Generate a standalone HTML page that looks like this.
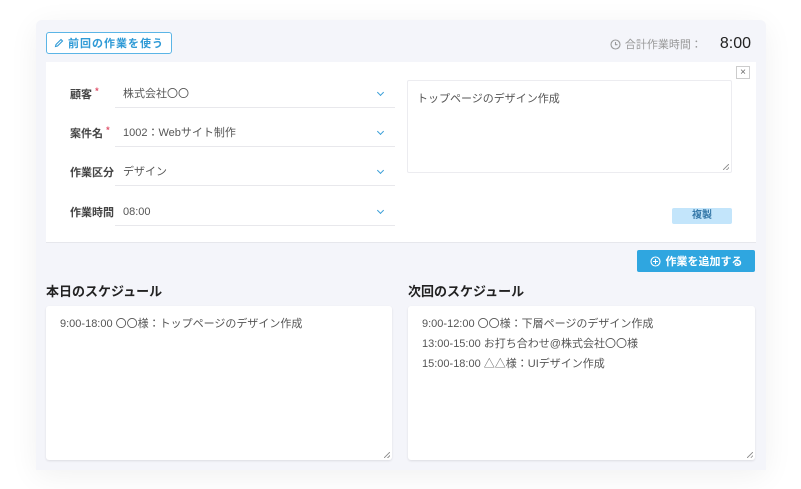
<!DOCTYPE html>
<html><head><meta charset="utf-8"><style>
*{box-sizing:border-box;margin:0;padding:0}
body{width:801px;height:489px;background:#fff;font-family:"Liberation Sans","Noto Sans CJK JP",sans-serif;position:relative;overflow:hidden;color:#555}
.card{position:absolute;left:36px;top:20px;width:730px;height:450px;background:#f4f5fa;border-radius:6px 6px 0 0;box-shadow:0 6px 30px rgba(0,0,0,.06)}
.abs{position:absolute}
.btn1{left:46px;top:32px;width:126px;height:22px;border:1px solid #5bb5e6;border-radius:3px;background:#fff;color:#2f9ad6;font-size:11px;font-weight:bold;display:flex;align-items:center;justify-content:center;gap:4px;letter-spacing:1px}
.total{right:50px;top:35px;font-size:11px;color:#999;display:flex;align-items:center;gap:4px}
.total b{font-weight:normal;color:#222;font-size:16px;margin-left:14px}
.panel{left:46px;top:62px;width:710px;height:181px;background:#fff;border-bottom:1px solid #e6e7ec}
.lbl{left:70px;font-size:11px;font-weight:bold;color:#444}
.lbl i{color:#e0526b;font-style:normal;font-size:9px;vertical-align:top}
.sel{left:115px;width:280px;height:22px;border-bottom:1px solid #e8e8ec;font-size:11px;color:#555;padding-left:8px;line-height:16px}
.sel:after{content:"";position:absolute;right:12px;top:4px;width:4px;height:4px;border-right:1.3px solid #3a9fd8;border-bottom:1.3px solid #3a9fd8;transform:rotate(45deg)}
.ta{left:407px;top:80px;width:325px;height:93px;border:1px solid #ececf0;border-radius:2px;font-size:11px;color:#555;padding:9px 9px}
.grip{position:absolute;right:2px;bottom:2px;width:6px;height:6px;background:linear-gradient(135deg,transparent 45%,#999 45%,#999 55%,transparent 55%,transparent 75%,#999 75%,#999 85%,transparent 85%)}
.x{left:736px;top:66px;width:14px;height:13px;border:1px solid #ccc;font-size:10px;line-height:11px;text-align:center;color:#666}
.dup{left:672px;top:208px;width:60px;height:16px;background:#c3e5fb;color:#3578a8;font-size:10px;font-weight:bold;text-align:center;line-height:16px;border-radius:2px}
.add{left:637px;top:250px;width:118px;height:22px;background:#2fa6e0;color:#fff;font-size:11px;font-weight:bold;display:flex;align-items:center;justify-content:center;gap:5px;border-radius:2px}
.h{top:281px;font-size:13px;font-weight:bold;color:#222}
.box{top:306px;width:346px;height:154px;background:#fff;border-radius:3px;box-shadow:0 1px 2px rgba(0,0,0,.1);font-size:11px;color:#555;padding:8px 14px;line-height:20px}
</style></head><body>
<div class="card"></div>
<div class="abs btn1"><svg width="10" height="10" viewBox="0 0 10 10"><path d="M1.5 8.5l.5-2 5-5 1.5 1.5-5 5z" fill="none" stroke="#2f9ad6" stroke-width="1.1"/></svg>前回の作業を使う</div>
<div class="abs total"><svg width="11" height="11" viewBox="0 0 11 11"><circle cx="5.5" cy="5.5" r="4.5" fill="none" stroke="#999" stroke-width="1.1"/><path d="M5.5 3v2.7h2" fill="none" stroke="#999" stroke-width="1.1"/></svg>合計作業時間：<b>8:00</b></div>
<div class="abs panel"></div>
<div class="abs lbl" style="top:86px">顧客 <i>*</i></div>
<div class="abs lbl" style="top:125px">案件名 <i>*</i></div>
<div class="abs lbl" style="top:164px">作業区分</div>
<div class="abs lbl" style="top:204px">作業時間</div>
<div class="abs sel" style="top:86px">株式会社〇〇</div>
<div class="abs sel" style="top:125px">1002：Webサイト制作</div>
<div class="abs sel" style="top:164px">デザイン</div>
<div class="abs sel" style="top:204px">08:00</div>
<div class="abs ta">トップページのデザイン作成<span class="grip"></span></div>
<div class="abs x">×</div>
<div class="abs dup">複製</div>
<div class="abs add"><svg width="11" height="11" viewBox="0 0 11 11"><circle cx="5.5" cy="5.5" r="4.5" fill="none" stroke="#fff" stroke-width="1.1"/><path d="M5.5 3v5M3 5.5h5" stroke="#fff" stroke-width="1.1"/></svg>作業を追加する</div>
<div class="abs h" style="left:46px">本日のスケジュール</div>
<div class="abs h" style="left:408px">次回のスケジュール</div>
<div class="abs box" style="left:46px">9:00-18:00 〇〇様：トップページのデザイン作成<span class="grip"></span></div>
<div class="abs box" style="left:408px;width:347px">9:00-12:00 〇〇様：下層ページのデザイン作成<br>13:00-15:00 お打ち合わせ@株式会社〇〇様<br>15:00-18:00 △△様：UIデザイン作成<span class="grip"></span></div>
</body></html>
